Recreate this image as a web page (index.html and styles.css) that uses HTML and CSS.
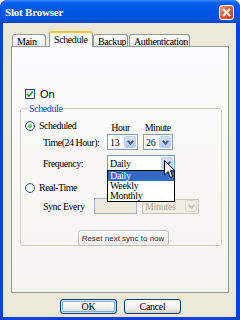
FILE: index.html
```html
<!DOCTYPE html>
<html lang="en">
<head>
    <meta charset="UTF-8">
    <title>Slot Browser</title>
    <link rel="stylesheet" href="styles.css">
</head>
<body>
    <div class="window">
        <!-- Title bar -->
        <div class="titlebar">
            <span class="title">Slot Browser</span>
            <span class="close">
                <svg width="9" height="9" viewBox="0 0 9 9"><path d="M1 1 L8 8 M8 1 L1 8" stroke="#fff" stroke-width="2"/></svg>
            </span>
        </div>

        <div class="client">
            <!-- Tabs -->
            <div class="tabs">
                <div class="tab tab-main">Main</div>
                <div class="tab tab-schedule active">Schedule</div>
                <div class="tab tab-backup">Backup</div>
                <div class="tab tab-auth">Authentication</div>
            </div>

            <div class="panel">
                <div class="on-row">
                    <span class="checkbox">
                        <svg width="8" height="8" viewBox="0 0 8 8"><path d="M1 4 L3 6 L7 1.5" fill="none" stroke="#21a121" stroke-width="1.6"/></svg>
                    </span>
                    <span class="on-label">On</span>
                </div>

                <fieldset class="group">
                    <legend>Schedule</legend>

                    <div class="row row-sched">
                        <span class="radio checked"></span>
                        <span class="txt">Scheduled</span>
                        <span class="txt col-hour">Hour</span>
                        <span class="txt col-min">Minute</span>
                    </div>

                    <div class="row row-time">
                        <span class="txt label">Time(24 Hour):</span>
                        <div class="select s-hour"><span class="val">13</span><span class="arrow"></span></div>
                        <div class="select s-min"><span class="val">26</span><span class="arrow"></span></div>
                    </div>

                    <div class="row row-freq">
                        <span class="txt label">Frequency:</span>
                        <div class="select s-freq">
                            <span class="val">Daily</span><span class="arrow"></span>
                            <ul class="dropdown">
                                <li class="sel">Daily</li>
                                <li>Weekly</li>
                                <li>Monthly</li>
                            </ul>
                            <svg class="cursor" width="12" height="19" viewBox="0 0 12 19"><path d="M0.5 0.5 L0.5 15 L4 11.5 L6.5 17.5 L8.8 16.5 L6.3 10.8 L11 10.8 Z" fill="#fff" stroke="#000" stroke-width="1"/></svg>
                        </div>
                    </div>

                    <div class="row row-real">
                        <span class="radio"></span>
                        <span class="txt">Real-Time</span>
                    </div>

                    <div class="row row-sync">
                        <span class="txt label-sync">Sync Every</span>
                        <span class="input disabled"></span>
                        <div class="select s-unit disabled"><span class="val">Minutes</span><span class="arrow"></span></div>
                    </div>

                    <div class="row row-reset">
                        <button class="reset">Reset next sync to now</button>
                    </div>
                </fieldset>
            </div>

            <div class="buttons">
                <button class="btn default">OK</button>
                <button class="btn">Cancel</button>
            </div>
        </div>
    </div>
</body>
</html>
```

FILE: styles.css
```css
body {
    margin: 0;
    background: #fff;
    font-family: "Liberation Serif", serif;
    font-size: 10px;
}
.window {
    width: 240px;
    height: 320px;
    display: flex;
    flex-direction: column;
    background: #0a3fe0;
    border-radius: 7px 7px 0 0;
    overflow: hidden;
}
.titlebar {
    height: 23px;
    flex: none;
    display: flex;
    align-items: center;
    justify-content: space-between;
    padding: 0 6px 0 5px;
    background: linear-gradient(#3d8cff 0%, #0a5ef0 12%, #0055e6 50%, #0052dd 85%, #0046c8 100%);
}
.title {
    color: #fff;
    font-weight: bold;
    font-size: 11px;
    letter-spacing: -0.2px;
    margin-top: 1px;
}
.close {
    width: 13px;
    height: 13px;
    display: flex;
    align-items: center;
    justify-content: center;
    border: 1px solid #fff;
    border-radius: 3px;
    background: linear-gradient(135deg, #f0a088 0%, #e05c36 45%, #c6401c 100%);
    margin-top: 1px;
}
.client {
    flex: 1;
    display: flex;
    flex-direction: column;
    margin: 0 4px 3px 3px;
    padding-top: 8px;
    background: #ece9d8;
}

/* tabs */
.tabs {
    height: 15px;
    display: flex;
    align-items: flex-end;
    padding-left: 9px;
    position: relative;
    z-index: 1;
}
.tab {
    height: 12px;
    box-sizing: border-box;
    border: 1px solid #919b9c;
    border-bottom: none;
    border-radius: 3px 3px 0 0;
    background: linear-gradient(#fff, #ecebe6);
    padding: 1px 0 0 4px;
    font-size: 10px;
    letter-spacing: -0.4px;
    line-height: 11px;
    white-space: nowrap;
    overflow: hidden;
}
.tab-main { width: 34px; margin-right: 3px; }
.tab-schedule { width: 44px; }
.tab-backup { width: 35px; margin-right: 1px; }
.tab-auth { width: 61px; }
.tab.active {
    height: 16px;
    margin-bottom: -1px;
    background: #fcfcfe;
    border-top: 2px solid #ffc83c;
    padding-top: 1px;
}

.panel {
    flex: 1;
    margin: 0 7px 0 8px;
    border: 1px solid #919b9c;
    background: linear-gradient(#fcfcfe, #f4f3ee);
    padding: 42px 6px 0 8px;
}
.on-row {
    display: flex;
    align-items: center;
    margin-left: 5px;
    height: 10px;
}
.checkbox {
    width: 10px;
    height: 10px;
    box-sizing: border-box;
    border: 1px solid #1c5180;
    background: linear-gradient(135deg, #dcdcd7, #fff);
    display: flex;
    align-items: center;
    justify-content: center;
}
.on-label {
    font-family: "Liberation Sans", sans-serif;
    font-size: 11px;
    margin-left: 5px;
}

.group {
    margin: 4px 0 0 0;
    padding: 4px 0 0 4px;
    border: 1px solid #d0d0bf;
    border-radius: 3px;
    height: 143px;
    box-sizing: border-box;
}
.group legend {
    color: #0046d5;
    font-size: 10px;
    letter-spacing: -0.4px;
    padding: 0 1px;
    margin-left: 3px;
    line-height: 11px;
}
.txt {
    font-size: 10px;
    letter-spacing: -0.5px;
    line-height: 11px;
}
.row {
    display: flex;
    align-items: center;
}
.radio {
    width: 10px;
    height: 10px;
    box-sizing: border-box;
    border-radius: 50%;
    border: 1px solid #2c5a8c;
    background: radial-gradient(circle at 65% 65%, #fff, #dcdcd7);
    margin-right: 4px;
    position: relative;
}
.radio.checked::after {
    content: "";
    position: absolute;
    left: 2px;
    top: 2px;
    width: 4px;
    height: 4px;
    border-radius: 50%;
    background: radial-gradient(circle at 35% 35%, #8ee08e, #21a121);
}
.row-sched { height: 11px; margin-top: 2px; }
.col-hour { margin-left: 35px; margin-top: 4px; }
.col-min { margin-left: 15px; margin-top: 4px; }
.row-time { margin-top: 3px; }
.row-freq { margin-top: 5px; }
.label {
    width: 64px;
    margin-left: 18px;
}
.label-sync {
    width: 51px;
    margin-left: 18px;
}

.select {
    height: 16px;
    box-sizing: border-box;
    border: 1px solid #7f9db9;
    background: #fff;
    display: flex;
    align-items: center;
    justify-content: space-between;
    padding: 0 1px 0 2px;
    position: relative;
}
.val {
    font-size: 10px;
    letter-spacing: -0.3px;
}
.arrow {
    width: 12px;
    height: 12px;
    box-sizing: border-box;
    border: 1px solid #b9cdf5;
    border-radius: 2px;
    background: linear-gradient(#d6e2fc, #b4c8f6);
    position: relative;
}
.arrow::after {
    content: "";
    position: absolute;
    left: 3px;
    top: 2px;
    width: 3px;
    height: 3px;
    border-right: 2px solid #4d6185;
    border-bottom: 2px solid #4d6185;
    transform: rotate(45deg);
}
.s-hour { width: 31px; }
.s-min { width: 30px; margin-left: 5px; }
.s-freq { width: 68px; }

.dropdown {
    position: absolute;
    left: -1px;
    top: 14px;
    width: 68px;
    box-sizing: border-box;
    margin: 0;
    padding: 0;
    list-style: none;
    border: 1px solid #000;
    background: #fff;
    z-index: 2;
}
.dropdown li {
    height: 10px;
    line-height: 10px;
    padding-left: 2px;
    font-size: 10px;
    letter-spacing: -0.3px;
    overflow: hidden;
}
.dropdown li.sel {
    background: #316ac5;
    color: #fff;
}
.cursor {
    position: absolute;
    left: 56px;
    top: 4px;
    z-index: 3;
}

.row-real { margin-top: 11px; }
.row-sync { margin-top: 5px; }
.input {
    width: 43px;
    height: 16px;
    box-sizing: border-box;
    border: 1px solid #a5b7cf;
    background: #ece9d8;
}
.s-unit {
    width: 57px;
    margin-left: 5px;
    height: 15px;
    border-color: #c9c7ba;
    background: #efede4;
}
.s-unit .val {
    color: #aca899;
}
.s-unit .arrow {
    border-color: #dad8ce;
    background: #efede4;
}
.s-unit .arrow::after {
    border-color: #c9c7ba;
}

.row-reset {
    justify-content: center;
    margin-top: 16px;
}
.reset {
    width: 91px;
    height: 16px;
    padding: 0;
    border: 1px solid #c2bfb4;
    border-radius: 3px;
    background: linear-gradient(#fff, #ecebe6);
    font-family: "Liberation Sans", sans-serif;
    font-size: 8px;
    color: #333;
}

.buttons {
    height: 15px;
    margin: 6px 0 3px;
    display: flex;
    justify-content: center;
    gap: 7px;
    padding-left: 2px;
}
.btn {
    width: 57px;
    height: 15px;
    padding: 0;
    border: 1px solid #003c74;
    border-radius: 3px;
    background: linear-gradient(#fff 0%, #f3f2ee 60%, #d6d0c5 100%);
    font-family: "Liberation Serif", serif;
    font-size: 10px;
    letter-spacing: -0.3px;
}
.btn.default {
    box-shadow: inset 0 0 0 1px #cee7ff, inset 0 0 0 2px #89ade4;
}
```
